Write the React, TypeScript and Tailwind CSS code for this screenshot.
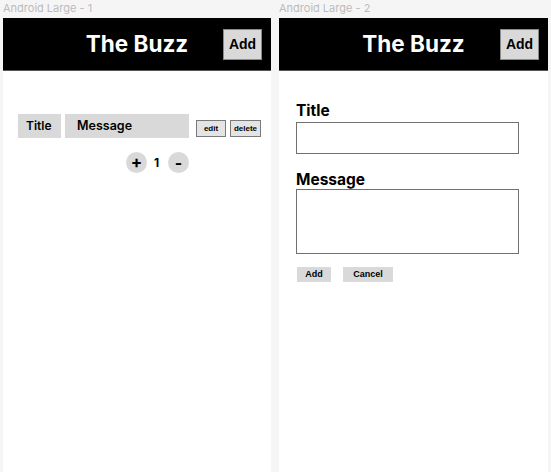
import type { ReactNode } from "react";

const inter = "font-['Inter','Liberation_Sans',sans-serif]";
const arial = "font-['Liberation_Sans','Arial',sans-serif]";

function Header() {
  return (
    <div className="grid h-[53px] grid-cols-[1fr_auto_1fr] items-center border-b border-[#555] bg-black">
      <div />
      <h1 className={`${inter} text-[22.5px] font-bold leading-none text-white`}>The Buzz</h1>
      <button
        className={`${arial} mr-[9px] h-[31px] w-[39px] justify-self-end border border-[#8a8a8a] bg-[#d9d9d9] text-[14px] font-bold text-black`}
      >
        Add
      </button>
    </div>
  );
}

function Frame({ label, width, children }: { label: string; width: string; children: ReactNode }) {
  return (
    <div className={`flex flex-col ${width}`}>
      <div className={`${inter} h-[18px] pt-[1px] text-[11px] leading-[14px] text-[#bcbcbc]`}>{label}</div>
      <div className="flex flex-1 flex-col bg-white">
        <Header />
        {children}
      </div>
    </div>
  );
}

function SmallButton({ children, className }: { children: ReactNode; className?: string }) {
  return (
    <button
      className={`${arial} flex h-[17px] items-center justify-center border border-[#7a7a7a] bg-[#e4e4e4] text-[8px] font-bold text-black ${className ?? ""}`}
    >
      {children}
    </button>
  );
}

function ListScreen() {
  return (
    <div className="flex flex-col pl-[15px] pt-[43px]">
      <div className="flex items-end">
        <div className={`${inter} flex h-[24px] w-[43px] items-center bg-[#d9d9d9] pl-[8px] text-[12px] font-semibold`}>
          Title
        </div>
        <div className={`${inter} ml-[4px] flex h-[24px] w-[124px] items-center bg-[#d9d9d9] pl-[12px] text-[12.5px] font-semibold`}>
          Message
        </div>
        <SmallButton className="mb-[1px] ml-[7px] w-[30px]">edit</SmallButton>
        <SmallButton className="mb-[1px] ml-[4px] w-[31px]">delete</SmallButton>
      </div>
      <div className={`${inter} ml-[108px] mt-[14px] flex items-center gap-[6px] text-[12px] font-bold`}>
        <span className="flex h-[21px] w-[21px] items-center justify-center rounded-full bg-[#d9d9d9] text-[17px] leading-none">
          +
        </span>
        <span className="w-[7px] text-center">1</span>
        <span className="ml-[2px] flex h-[21px] w-[21px] items-center justify-center rounded-full bg-[#d9d9d9] text-[16px] leading-none">
          -
        </span>
      </div>
    </div>
  );
}

function FormScreen() {
  return (
    <div className="flex flex-col pl-[17px] pt-[30px]">
      <label className={`${inter} text-[15.5px] font-bold leading-[19px] text-black`}>Title</label>
      <input className="mt-[2px] h-[32px] w-[223px] border border-[#707070] bg-white outline-none" />
      <label className={`${inter} mt-[16px] text-[15.5px] font-bold leading-[19px] text-black`}>Message</label>
      <textarea className="h-[65px] w-[223px] resize-none border border-[#707070] bg-white outline-none" />
      <div className="ml-[1px] mt-[13px] flex gap-[12px]">
        <button className={`${arial} h-[15px] w-[34px] bg-[#d9d9d9] text-[9px] font-bold text-black`}>Add</button>
        <button className={`${arial} h-[15px] w-[50px] bg-[#d9d9d9] text-[9px] font-bold text-black`}>Cancel</button>
      </div>
    </div>
  );
}

export default function App() {
  return (
    <div className="flex h-[472px] w-[551px] gap-[8px] overflow-hidden bg-[#f5f5f5] pl-[3px]">
      <Frame label="Android Large - 1" width="w-[268px]">
        <ListScreen />
      </Frame>
      <Frame label="Android Large - 2" width="w-[269px]">
        <FormScreen />
      </Frame>
    </div>
  );
}
